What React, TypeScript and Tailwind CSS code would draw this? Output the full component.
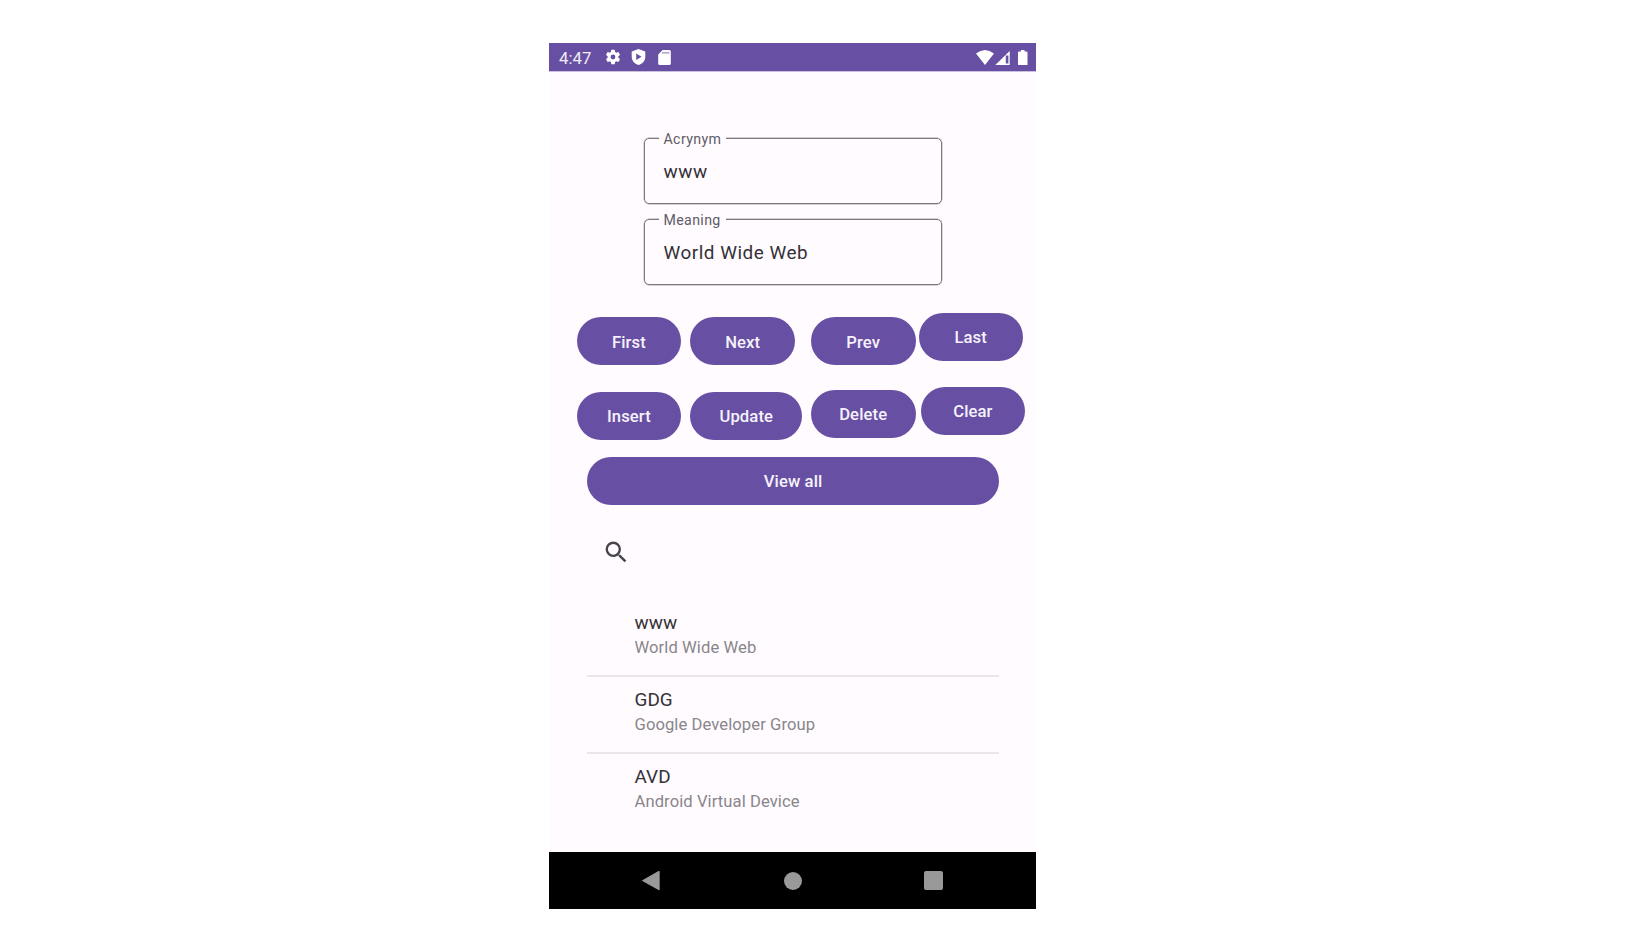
import React from "react";

const Field = ({ label, value }: { label: string; value: string }) => (
  <div className="relative h-[66px] w-[298px] rounded-[5px] border-[1.5px] border-[#7c7781] pl-[18.5px] pt-[21px] shadow-[0_0_0.5px_0.4px_#a8a4ac]">
    <span className="absolute left-[13.5px] top-[-8px] bg-[#fffbff] px-[5px] text-[14.2px] leading-4 tracking-[0.35px] text-[#605c66]">
      {label}
    </span>
    <span className="block text-[18.9px] leading-6 tracking-[0.52px] text-[#343236]">{value}</span>
  </div>
);

const Pill = ({ children, className }: { children: React.ReactNode; className: string }) => (
  <button
    className={`flex h-12 shrink-0 items-center justify-center rounded-full bg-[#6750a3] text-[16.6px] font-medium leading-6 tracking-[0.12px] text-[#f6f2fb] ${className}`}
  >
    {children}
  </button>
);

const Row = ({ title, sub }: { title: string; sub: string }) => (
  <li className="h-[77px] pl-[47.5px] pt-[11px]">
    <div className="text-[18.9px] leading-6 tracking-[0.05px] text-[#353337]">{title}</div>
    <div className="text-[16.6px] leading-[25px] tracking-[0.08px] text-[#89868b]">{sub}</div>
  </li>
);

export default function App() {
  return (
    <div className="h-[940px] w-full overflow-hidden bg-white pl-[549px] pt-[43px] font-['Roboto',sans-serif]">
      <main className="flex h-[866px] w-[487px] flex-col bg-[#fffbff]">
        <header className="flex h-7 shrink-0 items-center bg-[#6750a3] text-white shadow-[0_1px_0_#c9c0de]">
          <span className="w-[54.5px] pl-[10px] pt-[2px] text-[16.8px] leading-5 text-[#f0edf7]">4:47</span>
          <svg className="h-[18px] w-[18px]" viewBox="0 0 24 24" fill="currentColor">
            <path d="M19.14 12.94c.04-.3.06-.61.06-.94s-.02-.64-.07-.94l2.03-1.58a.49.49 0 0 0 .12-.61l-1.92-3.32a.49.49 0 0 0-.59-.22l-2.39.96a7 7 0 0 0-1.62-.94l-.36-2.54a.48.48 0 0 0-.48-.41h-3.84a.47.47 0 0 0-.47.41l-.36 2.54a7.3 7.3 0 0 0-1.62.94l-2.39-.96a.48.48 0 0 0-.59.22L2.74 8.87a.47.47 0 0 0 .12.61l2.03 1.58a6 6 0 0 0 0 1.88l-2.03 1.58a.49.49 0 0 0-.12.61l1.92 3.32c.12.22.37.29.59.22l2.39-.96c.5.38 1.03.7 1.62.94l.36 2.54c.05.24.24.41.48.41h3.84c.24 0 .44-.17.47-.41l.36-2.54a7 7 0 0 0 1.62-.94l2.39.96c.22.08.47 0 .59-.22l1.92-3.32a.47.47 0 0 0-.12-.61zM12 15.2a3.2 3.2 0 1 1 0-6.4 3.2 3.2 0 0 1 0 6.4z" />
          </svg>
          <svg className="ml-[9.5px] h-4 w-[15px]" viewBox="0 0 15 16">
            <path d="M7.5 0 14.3 2.6V7.4C14.3 11.5 11.5 14.8 7.5 16 3.5 14.8.7 11.5.7 7.4V2.6z" fill="currentColor" />
            <path d="M5.2 4.6v6.4L10.6 7.8z" fill="#6750a3" />
          </svg>
          <svg className="ml-[12px] mt-px h-[15px] w-[13px]" viewBox="0 0 13 15">
            <path d="M4.6 0H11.4Q12.8 0 12.8 1.5V13.5Q12.8 15 11.4 15H1.7Q.2 15 .2 13.5V4.6z" fill="currentColor" />
            <path d="M4 2.8H11.4" stroke="#b8add6" strokeWidth="1.8" />
          </svg>
          <svg className="ml-auto mr-[1px] h-[15px] w-[18px]" viewBox="0 0 18 15">
            <path d="M0 3.5Q9-3.5 18 3.5L9 15z" fill="currentColor" />
          </svg>
          <svg className="mr-[8.5px] mt-px h-[14px] w-[15px]" viewBox="0 0 15 14">
            <path d="M14.7 0V14H.3zM13.4 4.4H10.8V12.6H13.4z" fill="currentColor" fillRule="evenodd" />
          </svg>
          <svg className="mr-[8.5px] mt-px h-[15.5px] w-[9.5px]" viewBox="0 0 9 15" preserveAspectRatio="none">
            <path d="M2.8 0H6.2V1.5H8Q9 1.5 9 2.5V14Q9 15 8 15H1Q0 15 0 14V2.5Q0 1.5 1 1.5H2.8z" fill="currentColor" />
          </svg>
        </header>

        <section className="flex flex-col gap-[15px] pl-[95px] pt-[67px]">
          <Field label="Acrynym" value="www" />
          <Field label="Meaning" value="World Wide Web" />
        </section>

        <section className="flex items-start pl-[27.7px] pt-7">
          <Pill className="mt-[4.4px] w-[104.5px] pt-[3px]">First</Pill>
          <Pill className="ml-[9.3px] mt-[4.4px] w-[104.5px] pt-[3px]">Next</Pill>
          <Pill className="ml-[15.7px] mt-[4.4px] w-[105px] pt-[3px]">Prev</Pill>
          <Pill className="ml-[3px] w-[104px] pt-[2px]">Last</Pill>
        </section>
        <section className="flex items-start pl-[27.7px] pt-[21.2px]">
          <Pill className="mt-[5px] w-[104.5px] pt-[3px]">Insert</Pill>
          <Pill className="ml-[9.3px] mt-[5px] w-[111.5px] pt-[3px]">Update</Pill>
          <Pill className="ml-[8.7px] mt-[3px] w-[105px] pt-[3px]">Delete</Pill>
          <Pill className="ml-[5px] w-[104.5px] pt-[3px]">Clear</Pill>
        </section>
        <section className="pl-[38.3px] pt-[17.4px]">
          <Pill className="w-[411.5px] pt-[2.5px]">View all</Pill>
        </section>

        <div className="pl-[52.5px] pt-[33px]">
          <svg className="h-[28.5px] w-[28.5px]" viewBox="0 0 24 24" fill="#49454f">
            <path d="M15.5 14h-.79l-.28-.27A6.47 6.47 0 0 0 16 9.5 6.5 6.5 0 1 0 9.5 16c1.61 0 3.09-.59 4.23-1.57l.27.28v.79l5 4.99L20.49 19zm-6 0a4.5 4.5 0 1 1 0-9 4.5 4.5 0 0 1 0 9z" />
          </svg>
        </div>

        <ul className="ml-[38px] mt-[33.5px] w-[412px] divide-y-2 divide-[#e9e5ea]">
          <Row title="www" sub="World Wide Web" />
          <Row title="GDG" sub="Google Developer Group" />
          <Row title="AVD" sub="Android Virtual Device" />
        </ul>

        <nav className="mt-auto flex h-[57px] shrink-0 items-center bg-black text-[#999]">
          <svg className="ml-[93px] h-[20px] w-[18px]" viewBox="0 0 18 20" fill="currentColor">
            <path d="M.3 9.2 16.5.1Q17.7-.3 17.7.8V18.4Q17.7 19.5 16.5 19L.3 10Q0 9.6.3 9.2z" />
          </svg>
          <span className="ml-[124px] h-[18px] w-[18px] rounded-full bg-[#999]" />
          <span className="ml-[122px] h-[18.5px] w-[18.5px] rounded-[2px] bg-[#999]" />
        </nav>
      </main>
    </div>
  );
}
